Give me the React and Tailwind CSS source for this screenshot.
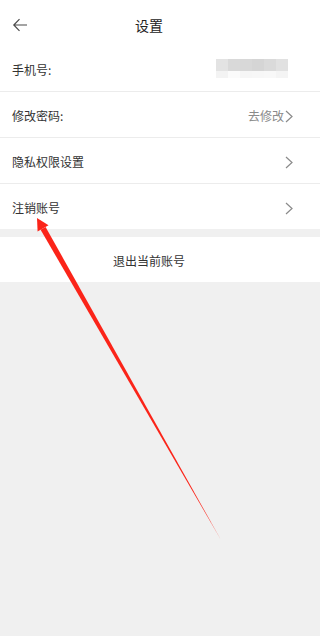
import React from "react";

const font = { fontFamily: '"Noto Sans CJK SC", "Noto Sans", sans-serif' };

function Chevron() {
  return (
    <svg width="8" height="13" viewBox="0 0 8 13" className="shrink-0">
      <polyline points="1,1 7,6.5 1,12" fill="none" stroke="#8a8a8a" strokeWidth="1.2" />
    </svg>
  );
}

function Row({ label, right, last }) {
  return (
    <div className={last ? "h-[45px]" : "h-[46px] border-b border-[#ececec]"}>
      <div className="w-[298px] h-full flex items-center justify-between pl-[12px] pr-[5px] pt-[3px]">
        <span className="text-[12px] text-[#333] leading-none">{label}</span>
        {right}
      </div>
    </div>
  );
}

function Mosaic() {
  const top = ["#e3e3e3", "#d9d9d9", "#d8d8d8", "#d5d5d5", "#dadada", "#e1e1e1"];
  const bottom = ["#f3f3f3", "#fbfbfb", "#f6f6f6", "#f7f7f7", "#f8f8f8", "#f4f4f4"];
  return (
    <div className="flex flex-col mr-[5px] -mt-[3px]">
      <div className="flex">
        {top.map((c, i) => (
          <div key={i} className="w-[12px] h-[12px]" style={{ background: c }} />
        ))}
      </div>
      <div className="flex">
        {bottom.map((c, i) => (
          <div key={i} className="w-[12px] h-[7px]" style={{ background: c }} />
        ))}
      </div>
    </div>
  );
}

export default function App() {
  return (
    <div className="relative w-full min-h-[636px] bg-[#f0f0f0] overflow-hidden" style={font}>
      <div className="h-[46px] bg-white">
        <div className="relative w-[298px] h-full flex items-center justify-center">
          <svg width="16" height="14" viewBox="0 0 16 14" className="absolute left-[12px] top-[18px]">
            <path d="M15 7 H2 M7.5 1.2 L1.8 7 L7.5 12.8" fill="none" stroke="#4a4a4a" strokeWidth="1.2" />
          </svg>
          <span className="text-[14px] text-[#222] leading-none pt-[4px]">设置</span>
        </div>
      </div>
      <div className="bg-white">
        <Row label="手机号:" right={<Mosaic />} />
        <Row
          label="修改密码:"
          right={
            <div className="flex items-center gap-[1px]">
              <span className="text-[12px] text-[#8a8a8a] leading-none">去修改</span>
              <Chevron />
            </div>
          }
        />
        <Row label="隐私权限设置" right={<Chevron />} />
        <Row label="注销账号" right={<Chevron />} last />
      </div>
      <div className="mt-[8px] h-[45px] bg-white">
        <div className="w-[298px] h-full flex items-center justify-center pt-[2px]">
          <span className="text-[12px] text-[#333] leading-none">退出当前账号</span>
        </div>
      </div>
      <svg
        className="absolute left-0 top-0 pointer-events-none"
        width="298"
        height="636"
        viewBox="0 0 298 636"
      >
        <polygon points="37,218 48.5,225.2 37.6,231.6" fill="#fb2419" />
        <polygon points="40.6,229.8 45.6,227 221,540" fill="#fb2419" />
      </svg>
    </div>
  );
}
